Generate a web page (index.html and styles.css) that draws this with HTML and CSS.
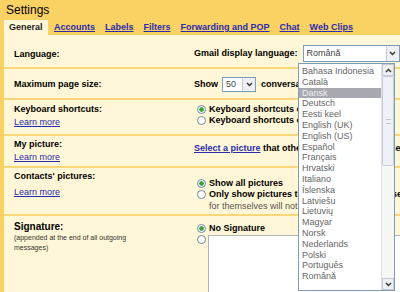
FILE: index.html
```
<!DOCTYPE html>
<html lang="ro">
<head>
    <meta charset="UTF-8">
    <title>Settings</title>
    <link rel="stylesheet" href="styles.css">
</head>
<body>
    <div class="header">
        <div class="title">Settings</div>
        <div class="tabs">
            <span class="tab active">General</span>
            <a href="#" class="tab">Accounts</a>
            <a href="#" class="tab">Labels</a>
            <a href="#" class="tab">Filters</a>
            <a href="#" class="tab">Forwarding and POP</a>
            <a href="#" class="tab">Chat</a>
            <a href="#" class="tab">Web Clips</a>
        </div>
    </div>

    <div class="panel">
        <div class="row row-lang">
            <div class="label"><b>Language:</b></div>
            <div class="value">
                <b>Gmail display language:</b>
                <span class="select select-lang">Română<span class="arrow"><svg width="7" height="5" viewBox="0 0 7 5"><polyline points="1,1 3.5,3.5 6,1" fill="none" stroke="#333" stroke-width="1.4"/></svg></span></span>
            </div>
        </div>

        <div class="row row-size">
            <div class="label"><b>Maximum page size:</b></div>
            <div class="value">
                <b>Show</b>
                <span class="select select-num">50<span class="arrow"><svg width="7" height="5" viewBox="0 0 7 5"><polyline points="1,1 3.5,3.5 6,1" fill="none" stroke="#333" stroke-width="1.4"/></svg></span></span>
                <b>conversations per page</b>
            </div>
        </div>

        <div class="row row-keys">
            <div class="label">
                <b>Keyboard shortcuts:</b>
                <a href="#">Learn more</a>
            </div>
            <div class="value stack">
                <label class="option"><span class="radio on"></span><b>Keyboard shortcuts on</b></label>
                <label class="option"><span class="radio"></span><b>Keyboard shortcuts off</b></label>
            </div>
        </div>

        <div class="row row-pic">
            <div class="label">
                <b>My picture:</b>
                <a href="#">Learn more</a>
            </div>
            <div class="value">
                <b><a href="#" class="strong-link">Select a picture</a> that others will see when you send them mail</b>
            </div>
        </div>

        <div class="row row-contacts">
            <div class="label">
                <b>Contacts' pictures:</b>
                <a href="#" class="spaced">Learn more</a>
            </div>
            <div class="value stack">
                <label class="option"><span class="radio on"></span><b>Show all pictures</b></label>
                <label class="option"><span class="radio"></span><b>Only show pictures that contacts have chosen</b></label>
                <span class="note">for themselves will not be shown)</span>
            </div>
        </div>

        <div class="row row-sig">
            <div class="label">
                <b class="sig-title">Signature:</b>
                <span class="hint">(appended at the end of all outgoing messages)</span>
            </div>
            <div class="value stack">
                <label class="option"><span class="radio on"></span><b>No Signature</b></label>
                <div class="sig-line">
                    <span class="radio"></span>
                    <div class="textarea"></div>
                </div>
            </div>
        </div>
    </div>

    <div class="dropdown">
        <ul class="options">
            <li>Bahasa Indonesia</li>
            <li>Català</li>
            <li class="current">Dansk</li>
            <li>Deutsch</li>
            <li>Eesti keel</li>
            <li>English (UK)</li>
            <li>English (US)</li>
            <li>Español</li>
            <li>Français</li>
            <li>Hrvatski</li>
            <li>Italiano</li>
            <li>Íslenska</li>
            <li>Latviešu</li>
            <li>Lietuvių</li>
            <li>Magyar</li>
            <li>Norsk</li>
            <li>Nederlands</li>
            <li>Polski</li>
            <li>Português</li>
            <li>Română</li>
        </ul>
        <div class="scrollbar">
            <span class="scroll-btn"><svg width="7" height="5" viewBox="0 0 7 5"><polyline points="1,4 3.5,1.5 6,4" fill="none" stroke="#333" stroke-width="1.4"/></svg></span>
            <span class="thumb"><span class="grip"></span></span>
            <span class="track"></span>
            <span class="scroll-btn"><svg width="7" height="5" viewBox="0 0 7 5"><polyline points="1,1 3.5,3.5 6,1" fill="none" stroke="#333" stroke-width="1.4"/></svg></span>
        </div>
    </div>
</body>
</html>
```

FILE: styles.css
```
* {
    margin: 0;
    padding: 0;
    box-sizing: border-box;
}

body {
    font-family: "Liberation Sans", Arial, sans-serif;
    font-size: 9px;
    color: #000;
    background: #fff7d7;
    width: 400px;
    height: 292px;
    overflow: hidden;
    position: relative;
}

a {
    color: #2b2bb0;
}

/* Header and tabs */
.header {
    background: #fad163;
    height: 35px;
}

.title {
    font-size: 12px;
    height: 20px;
    padding: 3px 0 0 6px;
}

.tabs {
    display: flex;
    align-items: center;
    height: 15px;
    padding-left: 4px;
    gap: 10px;
    white-space: nowrap;
}

.tab {
    font-weight: bold;
    line-height: 15px;
}

.tab.active {
    background: #fff7d7;
    color: #222;
    padding: 0 5px;
    width: 44px;
    margin-right: -4px;
}

/* Settings rows */
.panel {
    border-left: 4px solid #fad163;
    height: 257px;
}

.row {
    display: grid;
    grid-template-columns: 190px 1fr;
    border-bottom: 2px solid #f8d77a;
    white-space: nowrap;
}

.label {
    padding-left: 10px;
    display: flex;
    flex-direction: column;
    line-height: 12px;
}

.label a {
    line-height: 14px;
}

.value {
    display: flex;
    align-items: center;
    gap: 4px;
    line-height: 11px;
    overflow: hidden;
}

.stack {
    flex-direction: column;
    align-items: flex-start;
    gap: 0;
}

.row-lang {
    height: 34px;
    align-items: center;
    padding-top: 5px;
}

.row-size {
    height: 31px;
    align-items: center;
    padding-top: 1px;
}

.row-keys {
    height: 36px;
    padding-top: 3px;
}

.row-keys .value {
    padding-top: 1px;
}

.row-pic {
    height: 32px;
    padding-top: 2px;
}

.row-pic .value {
    align-items: flex-start;
    padding-top: 5px;
}

.row-contacts {
    height: 48px;
    padding-top: 2px;
}

.row-contacts .value {
    padding-top: 8px;
}

.label .spaced {
    margin-top: 3px;
}

.row-sig {
    border-bottom: none;
    padding-top: 5px;
}

.row-sig .value {
    padding-top: 2px;
}

.sig-title {
    font-size: 10px;
}

.hint {
    font-size: 7px;
    line-height: 10px;
    color: #333;
    white-space: normal;
    width: 120px;
}

/* Selects */
.select {
    display: inline-flex;
    align-items: center;
    justify-content: space-between;
    background: #fff;
    border: 1px solid #7f9db9;
    color: #444;
    padding-left: 3px;
}

.select-lang {
    width: 97px;
    height: 17px;
    margin-left: 1px;
}

.select-num {
    width: 34px;
    height: 15px;
    margin: 0 1px 0 0;
}

.arrow {
    display: flex;
    align-items: center;
    justify-content: center;
    width: 13px;
    height: 100%;
    background: #eef0f4;
    border-left: 1px solid #c3cad6;
}

/* Radios */
.option {
    display: flex;
    align-items: center;
    gap: 3px;
    padding-left: 3px;
}

.radio {
    display: inline-block;
    width: 9px;
    height: 9px;
    border: 1px solid #6f86a6;
    border-radius: 50%;
    background: #fff;
    flex-shrink: 0;
}

.radio.on {
    background: radial-gradient(circle, #3aa53a 0 2px, #fff 2.5px);
}

.note {
    color: #555;
    padding-left: 15px;
    line-height: 12px;
}

.strong-link {
    color: #2b2bb0;
}

.sig-line {
    display: flex;
    align-items: flex-start;
    gap: 2px;
    padding-left: 3px;
    padding-top: 1px;
}

.textarea {
    width: 200px;
    height: 60px;
    background: #fff;
    border: 1px solid #b5b5b5;
    margin-top: 0;
}

/* Open language list */
.dropdown {
    position: absolute;
    left: 298px;
    top: 63px;
    width: 97px;
    height: 228px;
    background: #fff;
    border: 1px solid #7f9db9;
    display: flex;
}

.options {
    list-style: none;
    flex: 1;
    padding-top: 2px;
    color: #666;
}

.options li {
    line-height: 10.8px;
    height: 10.8px;
    padding-left: 3px;
}

.options li.current {
    background: #a8a8b0;
    color: #eee;
}

.scrollbar {
    width: 13px;
    display: flex;
    flex-direction: column;
    background: #f7f7f5;
    border-left: 1px solid #e2e2e2;
}

.scroll-btn {
    display: flex;
    align-items: center;
    justify-content: center;
    height: 12px;
    background: #eef0f4;
    border: 1px solid #c3cad6;
}

.thumb {
    display: flex;
    align-items: center;
    justify-content: center;
    height: 90px;
    background: #eef1f8;
    border: 1px solid #c6cedd;
    border-radius: 2px;
}

.grip {
    width: 5px;
    height: 5px;
    border-top: 1px solid #c0c8d8;
    border-bottom: 1px solid #c0c8d8;
}

.track {
    flex: 1;
}
```
